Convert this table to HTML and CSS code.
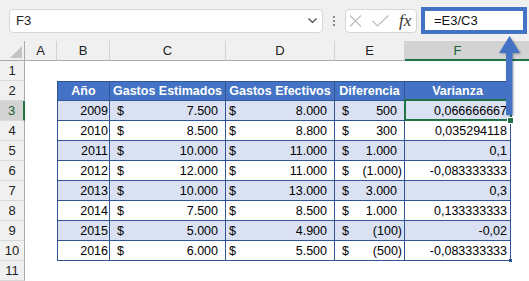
FILE: index.html
```html
<!DOCTYPE html>
<html lang="es">
<head>
<meta charset="utf-8">
<title>Varianza</title>
<link rel="stylesheet" href="styles.css">
</head>
<body>
<div class="toolbar">
  <div class="namebox"><span>F3</span>
    <svg class="chev" width="9" height="6" viewBox="0 0 9 6"><polyline points="0.5,0.5 4.5,4.5 8.5,0.5" fill="none" stroke="#444" stroke-width="1.2"/></svg>
  </div>
  <div class="dots"><i></i><i></i><i></i></div>
  <div class="fxbox">
    <svg class="ic-x" width="13" height="12" viewBox="0 0 13 12"><path d="M1 0.5 L12 11.5 M12 0.5 L1 11.5" stroke="#bdbdbd" stroke-width="1.2" fill="none"/></svg>
    <svg class="ic-ok" width="17" height="12" viewBox="0 0 17 12"><polyline points="0.5,6 5.5,11 16.5,0.5" stroke="#bdbdbd" stroke-width="1.2" fill="none"/></svg>
    <span class="fx">fx</span>
  </div>
  <div class="formula">=E3/C3</div>
</div>

<div class="sheet">
  <div class="corner"></div>
  <div class="ch">A</div><div class="ch">B</div><div class="ch">C</div><div class="ch">D</div><div class="ch">E</div><div class="ch sel">F</div><div class="ch sel last"></div>

  <div class="rh">1</div><div></div><div></div><div></div><div></div><div></div><div></div><div></div>

  <div class="rh">2</div><div></div>
  <div class="t th first">Año</div><div class="t th">Gastos Estimados</div><div class="t th">Gastos Efectivos</div><div class="t th">Diferencia</div><div class="t th">Varianza</div><div></div>

  <div class="rh sel">3</div><div></div>
  <div class="t band first yr">2009</div><div class="t band m"><span>$</span><span>7.500</span></div><div class="t band m d"><span>$</span><span>8.000</span></div><div class="t band m"><span>$</span><span>500</span></div><div class="t band v cur">0,066666667</div><div></div>

  <div class="rh">4</div><div></div>
  <div class="t first yr">2010</div><div class="t m"><span>$</span><span>8.500</span></div><div class="t m d"><span>$</span><span>8.800</span></div><div class="t m"><span>$</span><span>300</span></div><div class="t v">0,035294118</div><div></div>

  <div class="rh">5</div><div></div>
  <div class="t band first yr">2011</div><div class="t band m"><span>$</span><span>10.000</span></div><div class="t band m d"><span>$</span><span>11.000</span></div><div class="t band m"><span>$</span><span>1.000</span></div><div class="t band v">0,1</div><div></div>

  <div class="rh">6</div><div></div>
  <div class="t first yr">2012</div><div class="t m"><span>$</span><span>12.000</span></div><div class="t m d"><span>$</span><span>11.000</span></div><div class="t m neg"><span>$</span><span>(1.000)</span></div><div class="t v">-0,083333333</div><div></div>

  <div class="rh">7</div><div></div>
  <div class="t band first yr">2013</div><div class="t band m"><span>$</span><span>10.000</span></div><div class="t band m d"><span>$</span><span>13.000</span></div><div class="t band m"><span>$</span><span>3.000</span></div><div class="t band v">0,3</div><div></div>

  <div class="rh">8</div><div></div>
  <div class="t first yr">2014</div><div class="t m"><span>$</span><span>7.500</span></div><div class="t m d"><span>$</span><span>8.500</span></div><div class="t m"><span>$</span><span>1.000</span></div><div class="t v">0,133333333</div><div></div>

  <div class="rh">9</div><div></div>
  <div class="t band first yr">2015</div><div class="t band m"><span>$</span><span>5.000</span></div><div class="t band m d"><span>$</span><span>4.900</span></div><div class="t band m neg"><span>$</span><span>(100)</span></div><div class="t band v">-0,02</div><div></div>

  <div class="rh">10</div><div></div>
  <div class="t first yr">2016</div><div class="t m"><span>$</span><span>6.000</span></div><div class="t m d"><span>$</span><span>5.500</span></div><div class="t m neg"><span>$</span><span>(500)</span></div><div class="t v end">-0,083333333</div><div></div>

  <div class="rh">11</div><div></div><div></div><div></div><div></div><div></div><div></div><div></div>
</div>

<svg class="arrow" width="28" height="86" viewBox="0 0 28 86">
  <polygon points="3,19 24,19 13.5,2" fill="#4472c4"/>
  <rect x="10" y="18" width="6.5" height="63" fill="#4472c4"/>
</svg>
</body>
</html>
```

FILE: styles.css
```css
html, body {
  margin: 0;
  padding: 0;
}
body {
  width: 529px;
  height: 281px;
  overflow: hidden;
  position: relative;
  background: #f0f0f0;
  font-family: "Liberation Sans", Arial, sans-serif;
  color: #000;
}

/* ---------- formula bar ---------- */
.toolbar {
  height: 41px;
  box-sizing: border-box;
  display: flex;
  align-items: center;
  padding-left: 9px;
}
.namebox {
  width: 314px;
  height: 24px;
  box-sizing: border-box;
  border: 1px solid #d6d6d6;
  border-radius: 4px;
  background: #fff;
  display: flex;
  align-items: center;
  justify-content: space-between;
  padding: 0 5px 0 6px;
  font-size: 13px;
  color: #222;
}
.dots {
  margin: 0 10px;
  display: flex;
  flex-direction: column;
  gap: 2px;
}
.dots i {
  display: block;
  width: 2px;
  height: 2px;
  background: #8c8c8c;
}
.fxbox {
  width: 72px;
  height: 24px;
  box-sizing: border-box;
  border: 1px solid #d6d6d6;
  border-radius: 4px;
  background: #fff;
  display: flex;
  align-items: center;
  padding-left: 3px;
}
.ic-x { margin-right: 10px; }
.ic-ok { margin-right: 10px; }
.fx {
  font-family: "Liberation Serif", "Times New Roman", serif;
  font-style: italic;
  font-size: 17px;
  color: #333;
  line-height: 20px;
}
.formula {
  margin-left: 4px;
  width: 106px;
  height: 27px;
  box-sizing: border-box;
  border: 4px solid #4472c4;
  background: #fff;
  padding-left: 9px;
  font-size: 13px;
  line-height: 19px;
  color: #111;
}

/* ---------- sheet ---------- */
.sheet {
  display: grid;
  grid-template-columns: 25px 32px 53px 116px 109px 70px 106px 18px;
  grid-template-rows: repeat(12, 20px);
  background: #fff;
}
.sheet > div {
  box-sizing: border-box;
  min-width: 0;
}
.corner {
  background: #f0f0f0;
  border-right: 1px solid #ababab;
  border-bottom: 1px solid #ababab;
  position: relative;
}
.corner::after {
  content: "";
  position: absolute;
  right: 2px;
  bottom: 2px;
  width: 12px;
  height: 12px;
  background: #c4c4c4;
  clip-path: polygon(100% 0, 100% 100%, 0 100%);
}
.ch {
  background: #f0f0f0;
  border-right: 1px solid #d2d2d2;
  border-bottom: 1px solid #ababab;
  text-align: center;
  font-size: 13px;
  line-height: 20px;
  color: #222;
}
.ch.sel {
  background: #d3d3d3;
  border-bottom: 2px solid #217346;
  color: #1d5e3a;
}
.ch.last { border-right: none; }
.rh {
  background: #f0f0f0;
  border-right: 1px solid #ababab;
  border-bottom: 1px solid #d9d9d9;
  text-align: center;
  font-size: 13px;
  line-height: 20px;
  color: #222;
}
.rh.sel {
  background: #d3d3d3;
  border-right: 2px solid #217346;
  color: #1d5e3a;
}

/* ---------- table ---------- */
.t {
  border-right: 1px solid #2f5597;
  border-bottom: 1px solid #2f5597;
  font-size: 12.5px;
  line-height: 20px;
  white-space: nowrap;
  position: relative;
}
.t.first { border-left: 1px solid #2f5597; }
.th {
  background: #4472c4;
  border-top: 1px solid #2f5597;
  color: #fff;
  font-weight: bold;
  text-align: center;
  line-height: 18px;
}
.band { background: #d9e1f2; }
.yr {
  text-align: right;
  padding-right: 1px;
}
.m {
  display: flex;
  justify-content: space-between;
  padding: 0 7px 0 7px;
}
.m.d { padding-left: 3px; }
.m.neg { padding-right: 2px; }
.v {
  text-align: right;
  padding-right: 3px;
}

/* active cell */
.cur::after {
  content: "";
  position: absolute;
  left: -1px;
  top: -2px;
  right: -2px;
  bottom: -1px;
  border: 2px solid #217346;
}
.cur::before {
  content: "";
  position: absolute;
  right: -4px;
  bottom: -4px;
  width: 5px;
  height: 5px;
  background: #217346;
  border: 1px solid #fff;
  z-index: 2;
}
.end::after {
  content: "";
  position: absolute;
  right: -2px;
  bottom: -2px;
  width: 3px;
  height: 3px;
  background: #2f5597;
}

/* callout arrow */
.arrow {
  position: absolute;
  left: 496px;
  top: 34px;
  filter: drop-shadow(1px 1px 1px rgba(0, 0, 0, 0.3));
}
```
